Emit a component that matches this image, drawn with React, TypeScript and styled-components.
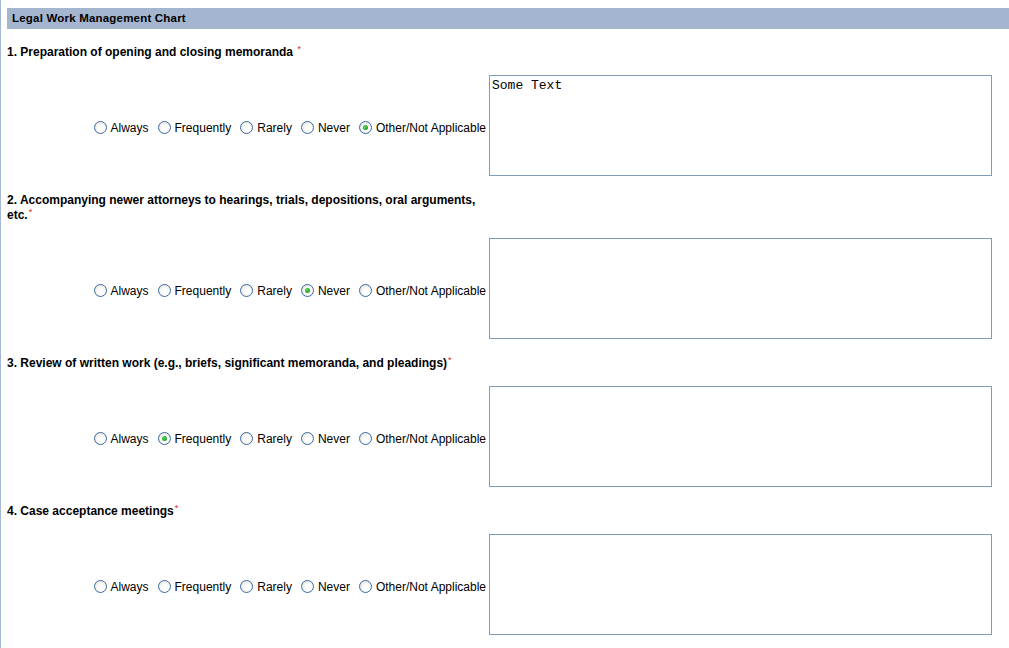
import React, { useState } from "react";
import styled, { createGlobalStyle } from "styled-components";

const GlobalStyle = createGlobalStyle`
  html, body {
    margin: 0;
    padding: 0;
    background: #ffffff;
  }
  body {
    font-family: "Liberation Sans", Arial, sans-serif;
    color: #000;
  }
`;

interface Question {
  id: number;
  title: string;
  answer: string;
  text: string;
}

const OPTIONS = ["Always", "Frequently", "Rarely", "Never", "Other/Not Applicable"];

const QUESTIONS: Question[] = [
  {
    id: 1,
    title: "1. Preparation of opening and closing memoranda ",
    answer: "Other/Not Applicable",
    text: "Some Text",
  },
  {
    id: 2,
    title:
      "2. Accompanying newer attorneys to hearings, trials, depositions, oral arguments, etc.",
    answer: "Never",
    text: "",
  },
  {
    id: 3,
    title:
      "3. Review of written work (e.g., briefs, significant memoranda, and pleadings)",
    answer: "Frequently",
    text: "",
  },
  {
    id: 4,
    title: "4. Case acceptance meetings",
    answer: "",
    text: "",
  },
];

function QuestionBlock({ q }: { q: Question }) {
  const [value, setValue] = useState(q.answer);
  const [text, setText] = useState(q.text);
  return (
    <Block>
      <Title>
        {q.title}
        <Required>*</Required>
      </Title>
      <AnswerRow>
        <RadioGroup>
          {OPTIONS.map((opt) => (
            <RadioLabel key={opt}>
              <Radio
                type="radio"
                name={`q${q.id}`}
                checked={value === opt}
                onChange={() => setValue(opt)}
              />
              {opt}
            </RadioLabel>
          ))}
        </RadioGroup>
        <Comment value={text} onChange={(e) => setText(e.target.value)} />
      </AnswerRow>
    </Block>
  );
}

export default function App() {
  return (
    <>
      <GlobalStyle />
      <Page>
        <Header>Legal Work Management Chart</Header>
        {QUESTIONS.map((q) => (
          <QuestionBlock key={q.id} q={q} />
        ))}
      </Page>
    </>
  );
}

const Page = styled.div`
  border-left: 1px solid #a4b7d4;
  padding: 8px 0 0 6px;
  min-height: 640px;
`;

const Header = styled.div`
  background: #a3b5cf;
  height: 21px;
  line-height: 21px;
  padding-left: 5px;
  font-size: 11.5px;
  font-weight: bold;
  letter-spacing: 0.2px;
`;

const Block = styled.div`
  padding-top: 15px;
  ${Header} + & {
    padding-top: 14px;
  }
`;

const Title = styled.div`
  width: 472px;
  font-size: 12px;
  font-weight: bold;
  line-height: 15px;
  padding: 2px 0 1px;
`;

const Required = styled.span`
  color: #e02020;
  font-size: 9px;
  font-weight: normal;
  line-height: 0;
  position: relative;
  top: -4px;
  margin-left: 1px;
`;

const AnswerRow = styled.div`
  display: flex;
  align-items: center;
  margin-top: 14px;
`;

const RadioGroup = styled.div`
  width: 482px;
  display: flex;
  justify-content: flex-end;
  align-items: center;
  gap: 9px;
  padding-right: 3px;
  margin-top: 4px;
  box-sizing: border-box;
`;

const RadioLabel = styled.label`
  display: flex;
  align-items: center;
  gap: 4px;
  font-size: 12px;
  color: #000;
  white-space: nowrap;
`;

const Radio = styled.input`
  appearance: none;
  margin: 0;
  width: 13px;
  height: 13px;
  border-radius: 50%;
  border: 1px solid #3a6aa0;
  background: radial-gradient(circle at 60% 60%, #ffffff 30%, #dcdcd4 100%);
  box-sizing: border-box;
  display: grid;
  place-items: center;
  &:checked::after {
    content: "";
    width: 5px;
    height: 5px;
    border-radius: 50%;
    background: radial-gradient(circle at 40% 40%, #5fd35f 0%, #21a121 70%);
  }
`;

const Comment = styled.textarea`
  width: 503px;
  height: 101px;
  box-sizing: border-box;
  border: 1px solid #7f9db9;
  padding: 2px;
  margin: 0;
  resize: none;
  font-family: "Liberation Mono", "Courier New", monospace;
  font-size: 13px;
  line-height: 15px;
  outline: none;
`;
